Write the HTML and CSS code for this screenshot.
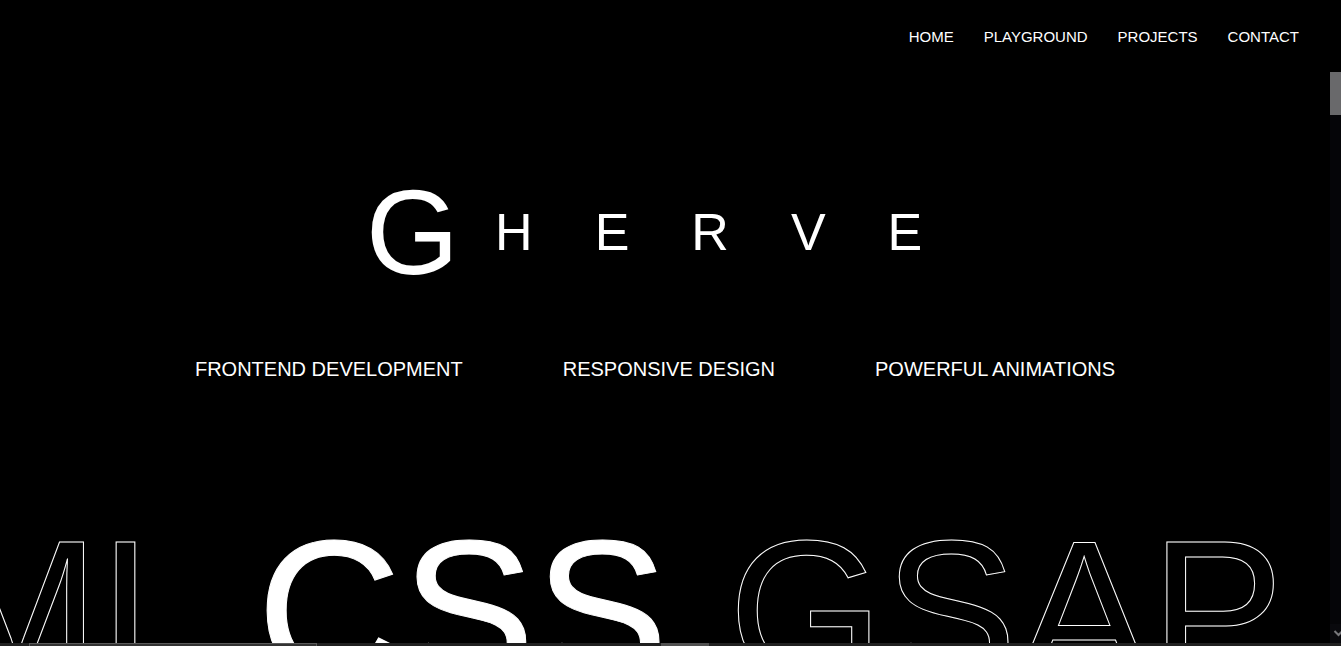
FILE: index.html
```
<!DOCTYPE html>
<html lang="en">
<head>
<meta charset="utf-8">
<meta name="viewport" content="width=device-width, initial-scale=1">
<title>Gherve</title>
<link rel="stylesheet" href="styles.css">
</head>
<body>
<div class="page">
  <div class="content">
    <header class="site-header">
      <nav class="nav" aria-label="Main">
        <a href="#home">HOME</a>
        <a href="#playground">PLAYGROUND</a>
        <a href="#projects">PROJECTS</a>
        <a href="#contact">CONTACT</a>
      </nav>
    </header>
    <main class="hero">
      <h1 class="brand"><span class="initial">G</span><span class="letters"><span>H</span><span>E</span><span>R</span><span>V</span><span>E</span></span></h1>
      <ul class="services">
        <li>FRONTEND DEVELOPMENT</li>
        <li>RESPONSIVE DESIGN</li>
        <li>POWERFUL ANIMATIONS</li>
      </ul>
    </main>
    <section class="ticker" aria-label="Skills">
      <div class="track">
        <span class="outline">HTML</span>
        <span class="solid">CSS</span>
        <span class="outline">GSAP</span>
      </div>
    </section>
  </div>
  <div class="rail" aria-hidden="true">
    <div class="rail-thumb"></div>
    <svg class="rail-arrow" width="11" height="19" viewBox="0 0 11 19"><path d="M4.500 7 L8.500 11 L12.500 7" fill="none" stroke="#77777b" stroke-width="2"/></svg>
  </div>
  <div class="bottom-edge" aria-hidden="true">
    <div class="tab"></div>
    <div class="marker"></div>
  </div>
</div>
</body>
</html>
```
FILE: styles.css
```
* {
  box-sizing: border-box;
}

body {
  margin: 0;
  background: #000;
  color: #fff;
  font-family: "Liberation Sans", Arial, sans-serif;
}

.page {
  display: grid;
  grid-template-columns: minmax(0, 1fr) 11px;
  grid-template-rows: minmax(0, 1fr) 3px;
  height: 100vh;
  overflow: hidden;
}

.content {
  display: flex;
  flex-direction: column;
  min-height: 0;
  overflow: hidden;
}

.site-header {
  padding: 28px 31px 0;
}

.nav {
  display: flex;
  justify-content: flex-end;
  gap: 30px;
}

.nav a {
  color: inherit;
  font-size: 15px;
  line-height: 18px;
  text-decoration: none;
}

.hero {
  display: flex;
  flex-direction: column;
  align-items: center;
  padding-top: 124px;
}

.brand {
  display: flex;
  align-items: center;
  gap: 36px;
  margin: 0;
  padding-right: 42px;
  font-weight: 400;
  line-height: 124px;
}

.initial {
  font-size: 120px;
}

.letters {
  display: flex;
  gap: 62px;
  font-size: 52px;
}

.services {
  display: flex;
  gap: 100px;
  margin: 0;
  padding: 63px 20px 0 0;
  list-style: none;
  font-size: 20px;
  line-height: 24px;
  white-space: nowrap;
}

.ticker {
  flex: none;
  padding-top: 118px;
  overflow: hidden;
}

.track {
  display: flex;
  justify-content: flex-end;
  gap: 46px;
  padding-right: 46px;
  font-size: 200px;
  line-height: 224px;
  white-space: nowrap;
}

.outline {
  color: transparent;
  -webkit-text-stroke: 1px #fff;
}

.solid {
  padding-right: 14px;
  -webkit-text-stroke: 1px #fff;
}

.rail {
  display: flex;
  flex-direction: column;
  justify-content: space-between;
  padding-top: 72px;
  background: linear-gradient(#000 72px, #050508 72px);
}

.rail-thumb {
  height: 43px;
  background: #69696b;
}

.rail-arrow {
  display: block;
  background: #09090d;
}

.bottom-edge {
  grid-column: 1 / -1;
  display: flex;
  gap: 344px;
  padding-left: 29px;
  background: #212121;
}

.tab {
  width: 288px;
  border: 1px solid #5a5a5a;
  border-bottom: 0;
  background: #333;
}

.marker {
  width: 48px;
  background: #505050;
}
```
